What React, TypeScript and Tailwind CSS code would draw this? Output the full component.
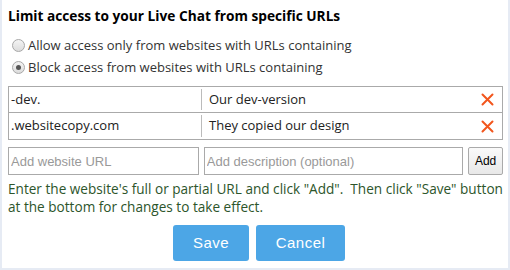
import { useState } from 'react';

const rules = [
  { url: '-dev.', note: 'Our dev-version' },
  { url: '.websitecopy.com', note: 'They copied our design' },
];

function RemoveIcon() {
  return (
    <svg width="13" height="13" viewBox="0 0 13 13" className="shrink-0">
      <path d="M1.5 1.5 L11.5 11.5 M11.5 1.5 L1.5 11.5" stroke="#f2561d" strokeWidth="2" strokeLinecap="round" />
    </svg>
  );
}

function Radio({ checked, onSelect }: { checked: boolean; onSelect: () => void }) {
  return (
    <span
      onClick={onSelect}
      className="ml-[4px] w-[13px] h-[13px] rounded-full border border-[#a8a8a8] bg-gradient-to-b from-[#f4f4f4] to-[#dcdcdc] flex items-center justify-center shrink-0"
    >
      {checked && <span className="w-[5px] h-[5px] rounded-full bg-[#555]" />}
    </span>
  );
}

export default function App() {
  const [mode, setMode] = useState<'allow' | 'block'>('block');

  return (
    <div className="w-[510px] h-[270px] bg-[#e6ebf4] pl-[2px] pr-[2px] pb-[2px] font-['Open_Sans',sans-serif]">
      <div className="h-full bg-white pl-[6px] pr-[5px] pt-[6px]">
        <h2 className="text-[13.7px] font-bold text-black leading-[19px]">
          Limit access to your Live Chat from specific URLs
        </h2>

        {/* mode radios */}
        <div className="mt-[11px] flex flex-col gap-[3px] text-[13px] text-[#333]">
          <label className="flex items-center gap-[3px] leading-[19px]">
            <Radio checked={mode === 'allow'} onSelect={() => setMode('allow')} />
            Allow access only from websites with URLs containing
          </label>
          <label className="flex items-center gap-[3px] leading-[19px]">
            <Radio checked={mode === 'block'} onSelect={() => setMode('block')} />
            Block access from websites with URLs containing
          </label>
        </div>

        {/* rule table */}
        <div className="mt-[9px] border border-[#aaa] text-[13px] text-[#222]">
          {rules.map((r, i) => (
            <div key={r.url} className={`flex h-[26px] ${i < rules.length - 1 ? 'border-b border-[#aaa]' : ''}`}>
              <div className="w-[193px] flex items-center pl-[2px] my-[2px] border-r border-[#bbb]">{r.url}</div>
              <div className="flex-1 flex items-center pl-[7px] pr-[8px]">
                <span className="flex-1">{r.note}</span>
                <RemoveIcon />
              </div>
            </div>
          ))}
        </div>

        {/* add row */}
        <div className="mt-[7px] flex gap-[5px] font-['Liberation_Sans',sans-serif] text-[13px]">
          <input
            placeholder="Add website URL"
            className="w-[192px] h-[28px] border border-[#aaa] px-[2px] placeholder:text-[#999] outline-none"
          />
          <input
            placeholder="Add description (optional)"
            className="w-[261px] h-[28px] border border-[#aaa] px-[2px] placeholder:text-[#999] outline-none"
          />
          <button className="w-[35px] h-[28px] border border-[#aaa] rounded-[2px] bg-gradient-to-b from-[#fafafa] to-[#e8e8e8] text-[12px] text-black">
            Add
          </button>
        </div>

        <p className="mt-[5px] text-[13.6px] leading-[18px] text-[#2d552b] whitespace-nowrap">
          Enter the website's full or partial URL and click "Add". &nbsp;Then click "Save" button
          <br />
          at the bottom for changes to take effect.
        </p>

        <div className="mt-[9px] pl-[7px] flex justify-center gap-[7px] font-['Liberation_Sans',sans-serif]">
          <button className="w-[76px] h-[36px] rounded-[3px] bg-[#4ca6e6] text-white text-[15px] tracking-[0.5px]">
            Save
          </button>
          <button className="w-[89px] h-[36px] rounded-[3px] bg-[#4ca6e6] text-white text-[15px] tracking-[0.5px]">
            Cancel
          </button>
        </div>
      </div>
    </div>
  );
}
